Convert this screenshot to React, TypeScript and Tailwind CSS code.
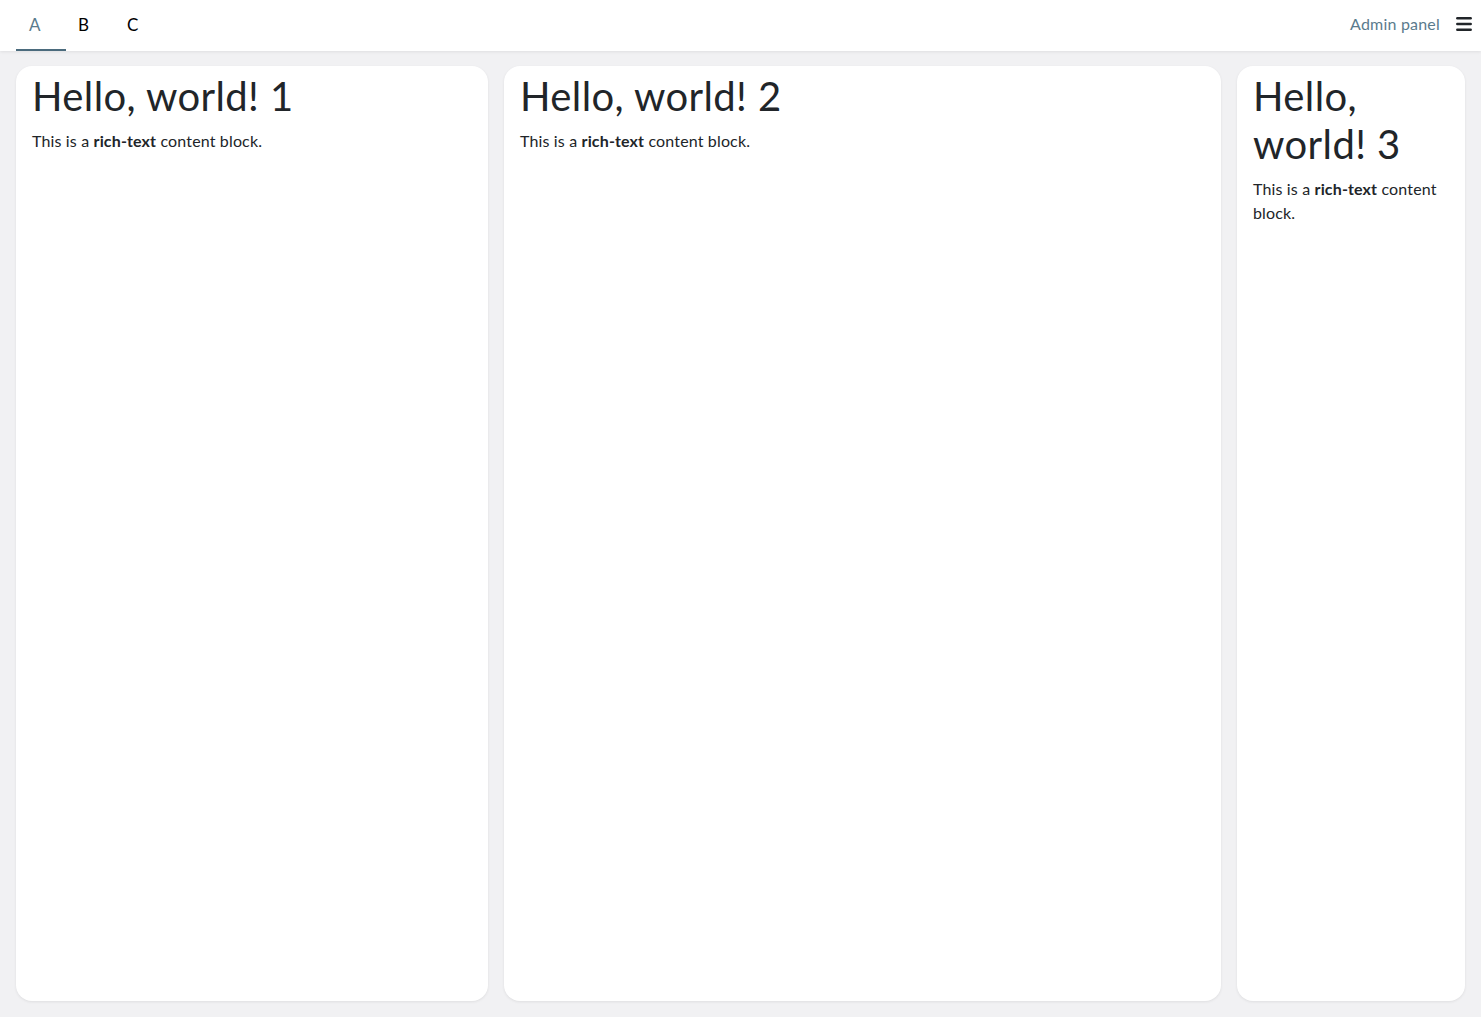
import { Menu } from 'lucide-react';

const tabs = ['A', 'B', 'C'];

const Card = ({ n }: { n: number }) => (
  <div className="bg-white rounded-2xl shadow-[0_1px_3px_rgba(0,0,0,0.08)] px-4 pt-[6px]">
    <h1 className="text-[40px] leading-[48px] tracking-[0.4px] mb-[9px] text-[#212529]">Hello, world! {n}</h1>
    <p className="text-base leading-6 tracking-[0.15px] text-[#212529]">
      This is a <strong className="font-bold">rich-text</strong> content block.
    </p>
  </div>
);

export default function App() {
  return (
    <div className="h-screen flex flex-col bg-[#f1f1f3] font-['Lato','Nunito',sans-serif]">
      <header className="h-[51px] -mb-px bg-white flex items-stretch justify-between pl-4 pr-[7px] shadow-[0_1px_3px_rgba(0,0,0,0.08)] z-10">
        <nav className="flex">
          {tabs.map((t, i) => (
            <div
              key={t}
              className={`w-[50px] -mr-[1px] flex items-center pl-[13px] pt-[1px] border-b-2 text-[17px] ${
                i === 0 ? 'border-[#4b6b7d] text-[#5a7b8d]' : 'border-transparent text-black'
              }`}
            >
              {t}
            </div>
          ))}
        </nav>
        <div className="flex items-center gap-[14px] pb-[3px]">
          <span className="text-[#5a7b8d] text-base tracking-[0.2px]">Admin panel</span>
          <Menu className="w-5 h-5 text-[#212529]" strokeWidth={3} />
        </div>
      </header>
      <main className="flex-1 grid grid-cols-[472px_1fr_228px] gap-4 p-4">
        <Card n={1} />
        <Card n={2} />
        <Card n={3} />
      </main>
    </div>
  );
}
